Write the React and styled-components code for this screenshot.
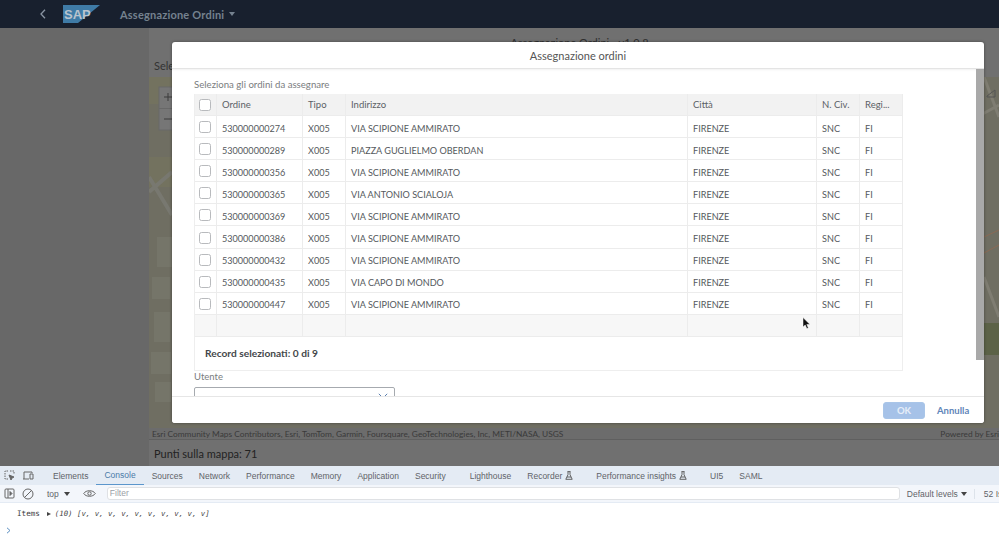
import React from "react";
import styled, { createGlobalStyle } from "styled-components";

const Global = createGlobalStyle`
  html, body { margin: 0; padding: 0; height: 100%; overflow: hidden; background: #fff; }
  #root { height: 100%; }
  * { box-sizing: border-box; }
  svg { flex: none; }
`;
const Page = styled.div`
  position: relative; width: 999px; height: 543px; display: flex; flex-direction: column;
  font-family: Lato, "Liberation Sans", sans-serif; overflow: hidden;
`;
const Shell = styled.header`
  height: 28px; flex: none; background: #18202e; display: flex; align-items: center; padding-left: 40px;
`;
const Logo = styled.svg` width: 37px; height: 18px; margin-left: 17px; `;
const AppTitle = styled.span`
  margin-left: 20px; color: #75828f; font-size: 11px; font-weight: 700; letter-spacing: .2px;
`;
const Caret = styled.span`
  margin-left: 5px; width: 0; height: 0; border: 3.5px solid transparent; border-top: 4px solid #75828f; border-bottom: 0;
`;
const Main = styled.div` flex: 1; min-height: 0; display: flex; `;
const Sidebar = styled.div` width: 149px; background: #686868; `;
const Content = styled.div`
  flex: 1; background: #707070; display: flex; flex-direction: column; padding-top: 8px; color: #2c2c2c;
`;
const VersionTitle = styled.div` text-align: center; font-size: 11px; height: 24px; color: #2f2f2f; padding-left: 11px; `;
const FieldLabel = styled.div` font-size: 11px; height: 17px; line-height: 11px; padding-left: 5px; color: #333; `;
const MapArea = styled.div` position: relative; height: 351px; background: #6d6c5f; overflow: hidden; `;
const MapDrawing = styled.svg` display: block; width: 850px; height: 351px; `;
const Attribution = styled.div`
  height: 12px; background: #6c6c6c; border-bottom: 1px solid #5f5f5f; font-size: 8.35px; color: #3a3a3a;
  display: flex; justify-content: space-between; padding: 0 0 0 3px; line-height: 13px; white-space: nowrap;
`;
const Points = styled.div` padding: 7px 0 0 5px; font-size: 11px; color: #222; `;

const Dialog = styled.section`
  position: absolute; left: 172px; top: 42px; width: 812px; height: 381px; background: #fff;
  border-radius: 3px; display: flex; flex-direction: column; box-shadow: 0 0 3px rgba(0,0,0,.4); overflow: hidden;
`;
const DialogHead = styled.div`
  height: 27px; flex: none; display: flex; align-items: center; justify-content: center;
  font-size: 11px; color: #555; border-bottom: 1px solid #e4e4e4; box-shadow: 0 1px 2px rgba(0,0,0,.06);
`;
const DialogBody = styled.div` flex: 1; min-height: 0; display: flex; overflow: hidden; `;
const BodyContent = styled.div` flex: 1; padding: 10px 0 0 22px; min-width: 0; `;
const Scrollbar = styled.div`
  flex: none; width: 8px; background: #fff;
  &::before { content: ""; display: block; height: 291px; background: #a9a9a9; }
`;
const SectionLabel = styled.div` font-size: 9.65px; color: #7a7d80; height: 15px; line-height: 11px; `;
const TableBox = styled.div` width: 709px; border: 1px solid #eee; border-top: 0; `;
const TableGrid = styled.div` display: grid; grid-template-columns: 22px 86px 43px 342px 129px 43px 43px; `;
const Cell = styled.div`
  height: ${p => p.$head ? 22 : 22.1}px; display: flex; align-items: center; padding: ${p => p.$head ? "0 0 0 5px" : "3px 0 0 5px"};
  font-size: ${p => p.$head ? 9.5 : 9.1}px; color: ${p => p.$head ? "#5c6166" : "#55595d"};
  background: ${p => p.$head ? "#f2f2f2" : p.$empty ? "#f7f7f7" : "#fff"};
  border-right: 1px solid #ececec; border-bottom: 1px solid #ececec; white-space: nowrap; overflow: hidden;
`;
const CheckCell = styled(Cell)` padding: 1px 0 0 4px; `;
const Check = styled.span`
  width: 12px; height: 12px; border: 1px solid #b8babd; border-radius: 2.5px; background: #fff; display: block;
`;
const Summary = styled.div` height: 33px; display: flex; align-items: center; padding: 0 0 0 10px; font-size: 10.2px; font-weight: 700; color: #44474a; `;
const UserLabel = styled.div` font-size: 9.5px; color: #7a7d80; height: 16px; line-height: 12px; `;
const Select = styled.div`
  width: 201px; height: 30px; border: 1px solid #a6aaaf; border-radius: 2px; background: #fff; display: flex;
  justify-content: flex-end; padding: 5px 6px 0 0; color: #5a7fb0;
`;
const DialogFoot = styled.div`
  height: 27px; flex: none; border-top: 1px solid #e6e6e6; display: flex; align-items: center; justify-content: flex-end;
  padding-right: 16px; gap: 12px; background: #fff; position: relative;
`;
const OkButton = styled.button`
  width: 42px; height: 17px; border: 1px solid #a9c5e8; border-radius: 3px; background: #a6c2e8; color: #e6eef8;
  font: 700 9.5px Lato, sans-serif; padding: 0;
`;
const CancelButton = styled.button`
  border: 0; background: none; color: #5f85b9; font: 700 9.5px Lato, sans-serif; padding: 0; width: 31px; white-space: nowrap;
`;
const Cursor = styled.svg` position: absolute; left: 802px; top: 317px; width: 9px; height: 13px; `;

const Devtools = styled.div` height: 77px; flex: none; background: #fff; display: flex; flex-direction: column; font-family: "Liberation Sans", sans-serif; `;
const TabBar = styled.div`
  height: 19px; flex: none; background: #e4ebf4; display: flex; align-items: stretch; font-size: 8.5px; color: #5f6368; padding-left: 4px;
`;
const TabIcons = styled.div` display: flex; gap: 7px; align-items: center; width: 41px; `;
const Tab = styled.div`
  display: flex; align-items: center; gap: 3px; padding: 0 8px; color: ${p => p.$active ? "#4a7aa8" : "#5f6368"};
  border-bottom: ${p => p.$active ? "1.5px solid #5b96cc" : "0"}; white-space: nowrap; margin-right: ${p => p.$gap ?? 0}px;
`;
const FilterBar = styled.div`
  height: 18px; flex: none; display: flex; align-items: center; border-bottom: 1px solid #e4ebf4; padding-left: 4px;
  font-size: 8.5px; color: #5f6368; background: #f3f6fb;
`;
const TopSelect = styled.span` display: inline-flex; align-items: center; gap: 5px; margin: 0 13px 0 13px; `;
const SmallCaret = styled.span` width: 0; height: 0; border: 3px solid transparent; border-top: 4px solid #444; border-bottom: 0; `;
const Filter = styled.div`
  width: 793px; height: 13px; margin-left: 11px; border: 1px solid #dfe1e4; border-radius: 3px; background: #fff; color: #9aa0a6;
  font-size: 8.5px; line-height: 11px; padding-left: 2px; flex: none;
`;
const Levels = styled.span` margin-left: 7px; display: inline-flex; align-items: center; gap: 3px; white-space: nowrap; `;
const Issues = styled.span` margin-left: 7px; padding-left: 9px; border-left: 1px solid #dde3ea; white-space: nowrap; `;
const ConsoleLine = styled.div`
  font-family: "DejaVu Sans Mono", "Liberation Mono", monospace; font-size: 7.6px; color: #3c3c3c; padding: 0 0 0 17px; height: 21px; white-space: pre;
  display: flex; align-items: center;
`;
const Obj = styled.i` color: #444; font-size: 7.35px; margin-left: 4px; `;
const Arrow = styled.span` width: 0; height: 0; border: 2.5px solid transparent; border-left: 4px solid #444; border-right: 0; margin-left: 7px; `;
const Prompt = styled.svg` display: block; width: 5px; height: 7px; margin: 3px 0 0 6px; `;

const rows = [
  ["530000000274", "VIA SCIPIONE AMMIRATO"],
  ["530000000289", "PIAZZA GUGLIELMO OBERDAN"],
  ["530000000356", "VIA SCIPIONE AMMIRATO"],
  ["530000000365", "VIA ANTONIO SCIALOJA"],
  ["530000000369", "VIA SCIPIONE AMMIRATO"],
  ["530000000386", "VIA SCIPIONE AMMIRATO"],
  ["530000000432", "VIA SCIPIONE AMMIRATO"],
  ["530000000435", "VIA CAPO DI MONDO"],
  ["530000000447", "VIA SCIPIONE AMMIRATO"],
];
const heads = ["Ordine", "Tipo", "Indirizzo", "Città", "N. Civ.", "Regi..."];
const tabs = [["Elements"], ["Console", true], ["Sources"], ["Network"], ["Performance"], ["Memory"], ["Application"], ["Security", false, 8], ["Lighthouse"], ["Recorder", false, 7, true], ["Performance insights", false, 7, true], ["UI5"], ["SAML"]];

const Flask = () => (
  <svg width="8" height="9" viewBox="0 0 8 9" fill="none" stroke="#555" strokeWidth=".9"><path d="M2.5.6h3M3 .6v3L.8 8.3h6.4L5 3.6V.6M2 6h4" /></svg>
);

export default function App() {
  return (
    <Page>
      <Global />
      <Shell>
        <svg width="6" height="10" viewBox="0 0 6 10" fill="none" stroke="#8a95a3" strokeWidth="1.3"><path d="M5 .8 1 5l4 4.2" /></svg>
        <Logo viewBox="0 0 37 18">
          <path d="M0 0h37L15 18H0z" fill="#3f7ba6" />
          <text x="1" y="13.5" fontFamily="Liberation Sans" fontWeight="700" fontSize="13" fill="#b9c3cd">SAP</text>
        </Logo>
        <AppTitle>Assegnazione Ordini</AppTitle>
        <Caret />
      </Shell>
      <Main>
        <Sidebar />
        <Content>
          <VersionTitle>Assegnazione Ordini - v1.0.8</VersionTitle>
          <FieldLabel>Seleziona</FieldLabel>
          <MapArea>
            <MapDrawing viewBox="0 0 850 351">
              <rect width="850" height="351" fill="#6f6e62" />
              <path d="M0 0h23v27H0zM0 80h23v30H0z" fill="#73725f" />
              <path d="M0 115 L23 95M0 100 L23 138" stroke="#787870" strokeWidth="4" fill="none" />
              <path d="M8 160h15v30H8zM3 200h18v22H3zM5 235h16v30H5zM2 275h20v22H2zM6 305h16v20H6z" fill="#757569" />
              <path d="M835 0 L850 40M828 40 L850 28M835 200 L850 240" stroke="#7f7d72" strokeWidth="3" fill="none" />
              <path d="M835 160 L850 153M835 176 L850 168" stroke="#8a6a55" strokeWidth="1" fill="none" />
              <rect x="835" y="246" width="15" height="32" fill="#5c6247" />
              <path d="M838 19l8-6v7h-8z" fill="none" stroke="#555" />
              <rect x="10" y="10" width="20" height="43" fill="#767676" stroke="#686868" />
              <path d="M10 31.5h20" stroke="#686868" />
              <path d="M15 20h8M19 16v8M15 42h8" stroke="#3a3a3a" strokeWidth="1" />
            </MapDrawing>
          </MapArea>
          <Attribution>
            <span>Esri Community Maps Contributors, Esri, TomTom, Garmin, Foursquare, GeoTechnologies, Inc, METI/NASA, USGS</span>
            <span>Powered by Esri</span>
          </Attribution>
          <Points>Punti sulla mappa: 71</Points>
        </Content>
      </Main>
      <Devtools>
        <TabBar>
          <TabIcons>
            <svg width="11" height="11" viewBox="0 0 11 11" fill="none" stroke="#666" strokeWidth="1"><path d="M4 1H1v8h3M6 1h4v3" strokeDasharray="1.5 1" /><path d="M5 5l5 2-2 1-1 2z" fill="#666" /></svg>
            <svg width="12" height="11" viewBox="0 0 12 11" fill="none" stroke="#666" strokeWidth="1"><path d="M1 9h6M2 9V2h8v1M8 4h3v5H8z" /></svg>
          </TabIcons>
          {tabs.map(([t, a, g, f]) => <Tab key={t} $active={a} $gap={g}>{t}{f && <Flask />}</Tab>)}
        </TabBar>
        <FilterBar>
          <svg width="11" height="11" viewBox="0 0 11 11" fill="none" stroke="#666" strokeWidth="1"><rect x="1" y="1" width="9" height="9" rx="1" /><path d="M4 1v9" /><path d="M6 3.5 8 5.5 6 7.5z" fill="#666" /></svg>
          <svg style={{ marginLeft: 7 }} width="12" height="12" viewBox="0 0 12 12" fill="none" stroke="#666" strokeWidth="1"><circle cx="6" cy="6" r="5" /><path d="M2.5 9.5l7-7" /></svg>
          <TopSelect>top <SmallCaret /></TopSelect>
          <svg width="13" height="9" viewBox="0 0 13 9" fill="none" stroke="#666" strokeWidth="1"><path d="M.7 4.5C3 .8 10 .8 12.3 4.5 10 8.2 3 8.2.7 4.5z" /><circle cx="6.5" cy="4.5" r="1.7" /></svg>
          <Filter>Filter</Filter>
          <Levels>Default levels <SmallCaret /></Levels>
          <Issues>52 Issues</Issues>
        </FilterBar>
        <ConsoleLine>Items<Arrow /><Obj>(10) [v, v, v, v, v, v, v, v, v, v]</Obj></ConsoleLine>
        <Prompt viewBox="0 0 5 7" fill="none" stroke="#5b8fc0" strokeWidth="1"><path d="M1 .8 4 3.5 1 6.2" /></Prompt>
      </Devtools>
      <Dialog>
        <DialogHead>Assegnazione ordini</DialogHead>
        <DialogBody>
          <BodyContent>
            <SectionLabel>Seleziona gli ordini da assegnare</SectionLabel>
            <TableBox>
              <TableGrid>
                <CheckCell $head><Check /></CheckCell>
                {heads.map(h => <Cell $head key={h}>{h}</Cell>)}
                {rows.map(([id, addr]) => (
                  <React.Fragment key={id}>
                    <CheckCell><Check /></CheckCell>
                    <Cell>{id}</Cell>
                    <Cell>X005</Cell>
                    <Cell>{addr}</Cell>
                    <Cell>FIRENZE</Cell>
                    <Cell>SNC</Cell>
                    <Cell>FI</Cell>
                  </React.Fragment>
                ))}
                {[0, 1, 2, 3, 4, 5, 6].map(i => <Cell $empty key={i} />)}
              </TableGrid>
              <Summary>Record selezionati: 0 di 9</Summary>
            </TableBox>
            <UserLabel>Utente</UserLabel>
            <Select>
              <svg width="10" height="6" viewBox="0 0 10 6" fill="none" stroke="currentColor" strokeWidth="1"><path d="M.8.8 5 5 9.2.8" /></svg>
            </Select>
          </BodyContent>
          <Scrollbar />
        </DialogBody>
        <DialogFoot>
          <OkButton>OK</OkButton>
          <CancelButton>Annulla</CancelButton>
        </DialogFoot>
      </Dialog>
      <Cursor viewBox="0 0 9 13"><path d="M1 .5v9.5l2.2-2 1.6 3.6 1.6-.7L4.8 7.5H8z" fill="#111" stroke="#fff" strokeWidth=".5" /></Cursor>
    </Page>
  );
}
